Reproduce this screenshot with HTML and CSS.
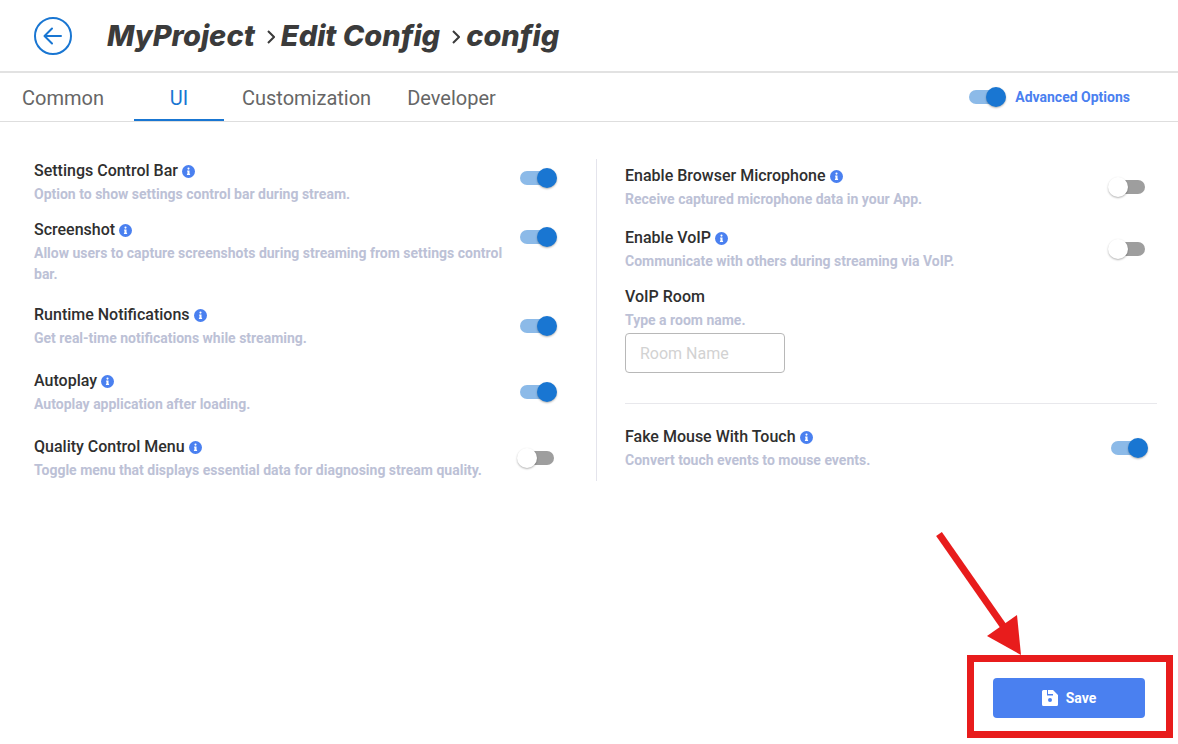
FILE: index.html
```html
<!DOCTYPE html>
<html lang="en">
<head>
    <meta charset="UTF-8">
    <meta name="viewport" content="width=device-width, initial-scale=1.0">
    <title>MyProject - Edit Config</title>
    <link rel="stylesheet" href="styles.css">
</head>
<body>

    <!-- info icon, reused by every option -->
    <svg class="sprite" width="0" height="0" aria-hidden="true">
        <symbol id="info" viewBox="0 0 512 512">
            <path fill="#4a80f0" d="M256 0a256 256 0 1 0 0 512a256 256 0 1 0 0-512z"/>
            <path fill="#fff" d="M256 100a42 42 0 1 1 0 84a42 42 0 1 1 0-84zM204 216h92v128h22v48H194v-48h22v-80h-12z"/>
        </symbol>
    </svg>

    <header class="header">
        <button class="back" type="button" aria-label="Back">
            <svg width="38" height="38" viewBox="0 0 38 38" fill="none" stroke="#1976d2" stroke-width="2" stroke-linecap="round" stroke-linejoin="round">
                <circle cx="19" cy="19" r="18"/>
                <path d="M27 19H11M18 11.5L10.500 19L18 26.500"/>
            </svg>
        </button>
        <h1 class="breadcrumb">
            <span>MyProject</span>
            <svg class="chevron" width="8" height="14" viewBox="0 0 8 14"><path d="M1 1l6 6-6 6"/></svg>
            <span>Edit Config</span>
            <svg class="chevron" width="8" height="14" viewBox="0 0 8 14"><path d="M1 1l6 6-6 6"/></svg>
            <span>config</span>
        </h1>
    </header>

    <nav class="tabs">
        <a class="tab first" href="#common">Common</a>
        <a class="tab active" href="#ui">UI</a>
        <a class="tab" href="#customization">Customization</a>
        <a class="tab" href="#developer">Developer</a>
        <label class="advanced">
            <input class="switch" type="checkbox" checked>
            Advanced Options
        </label>
    </nav>

    <main class="options">
        <section class="column">
            <div class="option tight">
                <div>
                    <label class="name" for="controlBar">Settings Control Bar <svg class="info"><use href="#info"/></svg></label>
                    <p class="desc">Option to show settings control bar during stream.</p>
                </div>
                <input class="switch" id="controlBar" type="checkbox" checked>
            </div>
            <div class="option top">
                <div>
                    <label class="name" for="screenshot">Screenshot <svg class="info"><use href="#info"/></svg></label>
                    <p class="desc">Allow users to capture screenshots during streaming from settings control bar.</p>
                </div>
                <input class="switch" id="screenshot" type="checkbox" checked>
            </div>
            <div class="option">
                <div>
                    <label class="name" for="notifications">Runtime Notifications <svg class="info"><use href="#info"/></svg></label>
                    <p class="desc">Get real-time notifications while streaming.</p>
                </div>
                <input class="switch" id="notifications" type="checkbox" checked>
            </div>
            <div class="option">
                <div>
                    <label class="name" for="autoplay">Autoplay <svg class="info"><use href="#info"/></svg></label>
                    <p class="desc">Autoplay application after loading.</p>
                </div>
                <input class="switch" id="autoplay" type="checkbox" checked>
            </div>
            <div class="option">
                <div>
                    <label class="name" for="quality">Quality Control Menu <svg class="info"><use href="#info"/></svg></label>
                    <p class="desc">Toggle menu that displays essential data for diagnosing stream quality.</p>
                </div>
                <input class="switch" id="quality" type="checkbox">
            </div>
        </section>

        <section class="column right">
            <div class="option">
                <div>
                    <label class="name" for="microphone">Enable Browser Microphone <svg class="info"><use href="#info"/></svg></label>
                    <p class="desc">Receive captured microphone data in your App.</p>
                </div>
                <input class="switch" id="microphone" type="checkbox">
            </div>
            <div class="option tight">
                <div>
                    <label class="name" for="voip">Enable VoIP <svg class="info"><use href="#info"/></svg></label>
                    <p class="desc">Communicate with others during streaming via VoIP.</p>
                </div>
                <input class="switch" id="voip" type="checkbox">
            </div>
            <div class="room">
                <label class="name" for="room">VoIP Room</label>
                <p class="desc">Type a room name.</p>
                <input class="text" id="room" type="text" placeholder="Room Name">
            </div>
            <div class="option">
                <div>
                    <label class="name" for="fakeMouse">Fake Mouse With Touch <svg class="info"><use href="#info"/></svg></label>
                    <p class="desc">Convert touch events to mouse events.</p>
                </div>
                <input class="switch" id="fakeMouse" type="checkbox" checked>
            </div>
        </section>
    </main>

    <footer class="footer">
        <div class="saveWrap">
            <button class="save" type="button">
                <svg width="16" height="16" viewBox="0 0 16 16">
                    <path fill="#fff" fill-rule="evenodd" d="M1.500 0H5v5.500h6V4H6V0h5l5 5v9.500a1.500 1.500 0 0 1-1.500 1.500h-13A1.500 1.500 0 0 1 0 14.500v-13A1.500 1.500 0 0 1 1.500 0zM8 8a2 2 0 1 0 0 4a2 2 0 1 0 0-4z"/>
                </svg>
                Save
            </button>
            <div class="highlight"></div>
            <svg class="arrow" width="100" height="130" viewBox="0 0 100 130">
                <path d="M9 6L76 102" stroke="#e81c1c" stroke-width="7"/>
                <path d="M91 127L87 87L57 108z" fill="#e81c1c"/>
            </svg>
        </div>
    </footer>

</body>
</html>
```
FILE: styles.css
```css
* {
    box-sizing: border-box;
}

body {
    font-family: Roboto, "Liberation Sans", sans-serif;
    margin: 0;
    min-height: 100vh;
    display: flex;
    flex-direction: column;
    background-color: #fff;
    color: #2f2f2f;
}

.sprite {
    display: none;
}

.header {
    display: flex;
    align-items: center;
    height: 73px;
    padding-left: 34px;
    border-bottom: 2px solid #e2e2e2;
}

.back {
    display: flex;
    padding: 0;
    border: none;
    background: none;
    cursor: pointer;
}

.breadcrumb {
    display: flex;
    align-items: center;
    margin: 0 0 0 35px;
    font-family: Inter, sans-serif;
    font-size: 29px;
    font-style: italic;
    font-weight: 800;
    line-height: 40px;
    color: #3b3b3b;
}

.chevron {
    margin: 2px 6px 0 12px;
    fill: none;
    stroke: #3b3b3b;
    stroke-width: 2;
}

.tabs {
    display: flex;
    height: 49px;
    padding: 0 48px 0 4px;
    border-bottom: 1px solid #dedede;
}

.tab {
    min-width: 90px;
    padding: 0 18px;
    font-size: 20px;
    line-height: 50px;
    text-align: center;
    text-decoration: none;
    color: #666;
}

.tab.first {
    margin-right: 12px;
}

.tab.active {
    color: #1976d2;
    border-bottom: 2px solid #1976d2;
}

.advanced {
    display: flex;
    align-items: center;
    margin-left: auto;
    font-size: 14px;
    font-weight: bold;
    color: #4a80f0;
}

/* switches */
.switch {
    appearance: none;
    flex: none;
    width: 34px;
    height: 14px;
    margin: 12px;
    border-radius: 7px;
    background-color: #9e9e9e;
    cursor: pointer;
}

.switch::before {
    content: '';
    display: block;
    width: 20px;
    height: 20px;
    margin: -3px 0 0 -3px;
    border-radius: 50%;
    background-color: #fff;
    box-shadow: 0 1px 2px rgba(0, 0, 0, 0.3);
}

.switch:checked {
    background-color: #8cbae8;
}

.switch:checked::before {
    margin-left: 17px;
    background-color: #1976d2;
}

.options {
    flex: 1;
    display: grid;
    grid-template-columns: 563fr 560fr;
    align-items: start;
    padding: 37px 21px 36px 34px;
}

.column {
    padding-right: 30px;
    border-right: 1px solid #e4e4ec;
}

.column.right {
    padding: 5px 0 0 28px;
    border: none;
}

.option {
    display: flex;
    align-items: center;
    justify-content: space-between;
    margin-bottom: 20px;
}

.option.top {
    margin-bottom: 18px;
}

.option.tight,
.option.top {
    align-items: flex-start;
}

.right .option {
    align-items: center;
    margin-bottom: 16px;
}

.option.tight,
.right .option.tight {
    margin-bottom: 13px;
}

.column .option:last-child {
    margin-bottom: 0;
}

.name {
    display: block;
    font-size: 16px;
    font-weight: 500;
    line-height: 24px;
}

.info {
    width: 13px;
    height: 13px;
    vertical-align: -2px;
}

.desc {
    margin: 1px 0 0;
    font-size: 14px;
    font-weight: bold;
    line-height: 21px;
    color: #bcc1d6;
}

.room {
    padding-bottom: 30px;
    margin-bottom: 21px;
    border-bottom: 1px solid #e8e8ec;
}

.text {
    display: block;
    width: 160px;
    height: 40px;
    margin-top: 2px;
    padding: 0 14px;
    border: 1px solid #b8b8b8;
    border-radius: 4px;
    font-family: inherit;
    font-size: 16px;
}

.text::placeholder {
    color: #d2d2d2;
}

.footer {
    display: flex;
    justify-content: flex-end;
    padding: 0 33px 26px;
}

.saveWrap {
    position: relative;
}

.save {
    display: flex;
    align-items: center;
    justify-content: center;
    gap: 8px;
    width: 152px;
    height: 40px;
    border: none;
    border-radius: 4px;
    background-color: #4a80f0;
    color: #fff;
    font-family: inherit;
    font-size: 14px;
    font-weight: bold;
    cursor: pointer;
}

/* red marker around the save button */
.highlight {
    position: absolute;
    inset: -23px -28px -20px -26px;
    border: 7px solid #e81c1c;
    pointer-events: none;
}

.arrow {
    position: absolute;
    left: -63px;
    top: -150px;
    pointer-events: none;
}
```
